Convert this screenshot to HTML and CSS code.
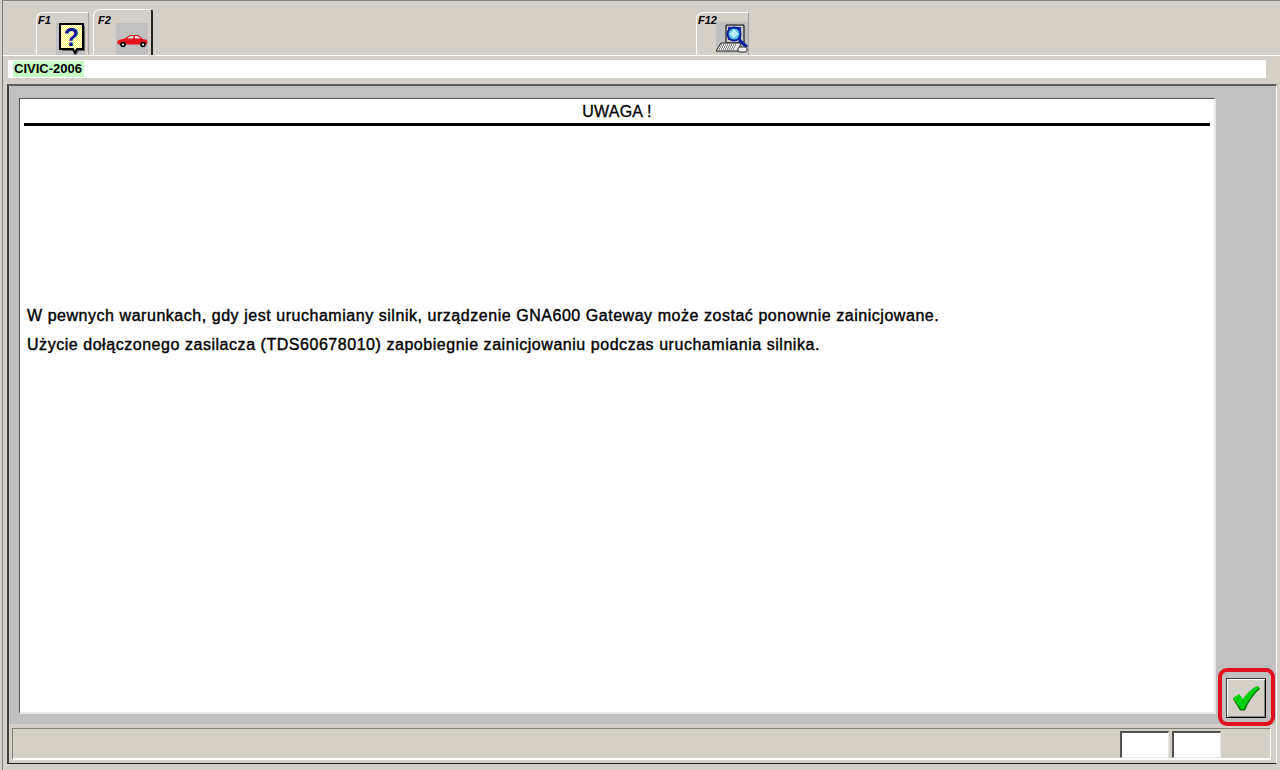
FILE: index.html
```html
<!DOCTYPE html>
<html lang="pl">
<head>
<meta charset="utf-8">
<title>UWAGA</title>
<link rel="stylesheet" href="styles.css">
</head>
<body>
<div class="window">
  <div class="toolbar">
    <div class="tab tab-f1">
      <span class="key">F1</span>
      <span class="icon-box">
        <svg width="29" height="32" viewBox="0 0 29 32">
          <defs><pattern id="chk" width="2" height="2" patternUnits="userSpaceOnUse"><rect width="2" height="2" fill="#ffff70"/><rect width="1" height="1" fill="#fff"/><rect x="1" y="1" width="1" height="1" fill="#fff"/></pattern></defs>
          <path d="M6 3h23v25h-6l-3 4v-4H6z" fill="#444" opacity=".75"/>
          <path d="M4 1h23v25h-6l-2 4-2-4H4z" fill="url(#chk)" stroke="#000" stroke-width="2"/>
          <text x="15.500" y="23" class="q">?</text>
        </svg>
      </span>
    </div>
    <div class="tab tab-f2">
      <span class="key">F2</span>
      <span class="icon-box icon-car">
        <svg width="32" height="32" viewBox="0 0 32 32">
          <path d="M1 19l1.500-2 6.500-1.500 5-3.500h8l5 4 4 1 .5 2.500-1 2H2z" fill="#e8101c"/>
          <path d="M11 15.500l3.500-2.500h3v2.500zM19 13h2.500l3.500 2.500H19z" fill="#e0e0e0"/>
          <circle cx="7" cy="21.500" r="2.800" fill="#000"/><circle cx="7" cy="21.500" r="1.100" fill="#fff"/>
          <circle cx="27" cy="21.500" r="2.800" fill="#000"/><circle cx="27" cy="21.500" r="1.100" fill="#fff"/>
        </svg>
      </span>
    </div>
    <div class="tab tab-f12">
      <span class="key">F12</span>
      <span class="icon-box icon-pc">
        <svg width="32" height="31" viewBox="0 0 32 31">
          <path d="M10 3h18v18H10z" fill="#c4c4c4" stroke="#000"/>
          <path d="M12 5h13v13H12z" fill="#0a38b0"/>
          <path d="M5 21h20l-3 8H0z" fill="#e8e8e8" stroke="#222"/>
          <path d="M5 23h16M4 25h16M3 27h16" stroke="#333" stroke-dasharray="1 1"/>
          <path d="M23 18l8 7" stroke="#0a1e9c" stroke-width="3"/>
          <circle cx="18" cy="12" r="6.500" fill="#50c0e0" stroke="#0a1e9c" stroke-width="2"/>
          <path d="M18 7l4.500 5-4.500 4-4.500-4z" fill="#b8f0f8"/>
          <rect x="22" y="25" width="9" height="5" rx="2" fill="#eee" stroke="#333"/>
        </svg>
      </span>
    </div>
  </div>
  <div class="pathbar"><span class="vehicle">CIVIC-2006</span></div>
  <div class="frame">
    <div class="panel">
      <main class="page">
        <h1 class="title">UWAGA !</h1>
        <div class="message">
          <p>W pewnych warunkach, gdy jest uruchamiany silnik, urządzenie GNA600 Gateway może zostać ponownie zainicjowane.</p>
          <p>Użycie dołączonego zasilacza (TDS60678010) zapobiegnie zainicjowaniu podczas uruchamiania silnika.</p>
        </div>
      </main>
      <aside class="side">
        <div class="highlight">
          <button class="ok" type="button" aria-label="OK">
            <svg width="30" height="30" viewBox="0 0 30 30">
              <path d="M2 16l6-4 4 5C16 11 21 6 27 3l2 3C22 12 17 20 14 27.500H9z" fill="#007a00"/>
              <path d="M2 15l6-4 4 5C16 10 21 5 27 3l1 2C21 11 16 19 13 26h-3z" fill="#00d010"/>
            </svg>
          </button>
        </div>
      </aside>
    </div>
    <div class="statusrow">
      <div class="status">
        <span class="field"></span>
        <span class="field"></span>
      </div>
    </div>
  </div>
  <div class="foot"></div>
</div>
</body>
</html>
```
FILE: styles.css
```css
* { box-sizing: border-box; }
html, body { margin: 0; height: 770px; overflow: hidden; }
body { background: #d4d0c8; font-family: "Liberation Sans", Arial, sans-serif; color: #000; }
.window { margin-left: 2px; height: 770px; border-left: 1px solid #808080; border-top: 1px solid #808080; display: flex; flex-direction: column; }

.toolbar { height: 55px; display: flex; align-items: flex-end; border-bottom: 1px solid #fff; padding-left: 33px; flex: none; }
.tab { position: relative; display: flex; justify-content: flex-end; align-items: flex-end; border-top: 1px solid #fff; border-left: 1px solid #fff; border-top-left-radius: 7px; border-right: 1px solid #a0a0a0; }
.tab-f1 { width: 53px; height: 43px; padding-right: 3px; }
.tab-f2 { width: 60px; height: 46px; margin-left: 4px; padding-right: 3px; border-right: 2px solid #222; border-top-right-radius: 3px; }
.tab-f12 { width: 53px; height: 43px; margin-left: 543px; }
.key { position: absolute; left: 1px; top: 1px; font-size: 11px; line-height: 12px; font-weight: bold; font-style: italic; }
.tab-f2 .key { top: 4px; left: 4px; }
.icon-box { display: block; width: 29px; height: 32px; background: #c0c0c0; }
.icon-car { width: 32px; }
.icon-pc { width: 32px; height: 31px; margin-bottom: 2px; }
.icon-box svg { display: block; }
.q { font: bold 25px "Liberation Sans", Arial, sans-serif; fill: #0a1a9c; text-anchor: middle; }

.pathbar { height: 18px; margin: 4px 14px 0 5px; background: #fff; padding: 1px 0 0 5px; flex: none; }
.vehicle { display: block; width: 71px; height: 16px; background: #c4fcc4; font-size: 13px; font-weight: bold; line-height: 16px; padding-left: 1px; white-space: nowrap; }

.frame { margin: 6px 3px 0 4px; height: 680px; border-top: 2px solid #606060; border-left: 2px solid #404040; border-right: 1px solid #fff; border-bottom: 1px solid #202020; display: flex; flex-direction: column; flex: none; }
.panel { height: 638px; background: #c0c0c0; display: flex; padding: 12px 0 0 10px; flex: none; }
.page { width: 1197px; height: 616px; background: #fff; border-top: 1px solid #505050; border-left: 1px solid #505050; border-right: 2px solid #e8e8e8; border-bottom: 2px solid #e8e8e8; padding: 0 4px 0 4px; flex: none; }
.title { margin: 0; height: 27px; border-bottom: 3px solid #000; font-size: 16px; font-weight: normal; line-height: 26px; letter-spacing: .2px; text-align: center; -webkit-text-stroke: .3px #000; }
.message { padding: 175px 0 0 3px; font-size: 16px; line-height: 29px; letter-spacing: .54px; -webkit-text-stroke: .4px #000; }
.message p { margin: 0; white-space: nowrap; }
.side { flex: 1; position: relative; }
.highlight { position: absolute; left: 2px; top: 570px; width: 57px; height: 58px; border: 4px solid #e01020; border-radius: 9px; background: #c0c0c0; padding: 6px 0 0 4px; }
.ok { display: flex; align-items: center; justify-content: center; width: 40px; height: 40px; padding: 0; background: #d4d0c8; border: 1px solid #000; border-top-color: #404040; border-left-color: #404040; box-shadow: inset 1px 1px 0 #fff, inset -1px -1px 0 #808080; }

.statusrow { flex: 1; padding: 4px 5px 0 3px; }
.status { height: 32px; border: 1px solid #808070; border-right-color: #fff; border-bottom: 2px solid #fff; display: flex; justify-content: flex-end; gap: 3px; padding: 2px 49px 0 0; }
.field { display: block; width: 49px; height: 27px; background: #fff; border-top: 2px solid #505050; border-left: 2px solid #505050; border-right: 1px solid #e8e8e8; border-bottom: 1px solid #e8e8e8; }
.foot { flex: 1; }
```
